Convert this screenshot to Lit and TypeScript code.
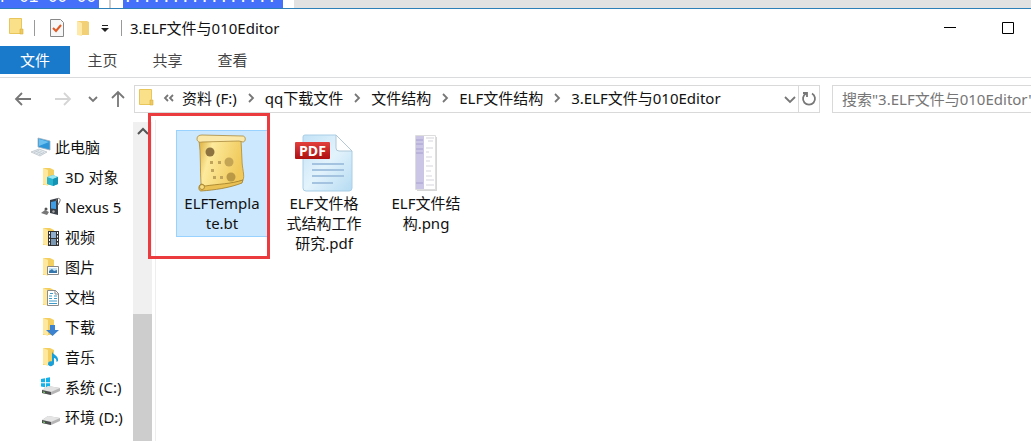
import { LitElement, html, svg, css } from "lit";
import { customElement } from "lit/decorators.js";

const folder = svg`<path d="M2 1h7l4 2v15H2z" fill="#f3cf62"/><path d="M2 1l5 2v16l-5-2z" fill="#ffe79b"/>`;

const icons: Record<string, unknown> = {
  pc: svg`<path d="M7 1l12 3v9L7 10z" fill="#2d95d8" stroke="#9fb4c2" stroke-width=".8"/><path d="M8 2l10 3-10 4z" fill="#6bc0f0"/><path d="M0 15l8-3 8 3-7 4z" fill="#e3e9ed" stroke="#b5bec5" stroke-width=".7"/><path d="M3 15.500l5-2M5.500 16.500l5-2M8 17.500l5-2" stroke="#b2bdc5" stroke-width=".7"/>`,
  cube: svg`${folder}<path d="M6 10l6-2 5 2v7l-5 2-6-2z" fill="#28b4cf"/><path d="M6 10l6-2 5 2-5 2z" fill="#9be6f0"/><path d="M12 12l5-2v7l-5 2z" fill="#1593b4"/>`,
  phone: svg`<path d="M9 3l8-2v17l-8-2z" fill="#3a4048"/><path d="M10 5l5-1v8l-5-.5z" fill="#3f9ee5"/><path d="M15 4c1-4 5-3 4 0l-2 4" fill="none" stroke="#777"/><path d="M0 16l4-3 4 2-2 3-3-1z" fill="#777"/><circle cx="5" cy="12" r="1.500" fill="#555"/><circle cx="12.500" cy="14.500" r="1.200" fill="#aaa"/>`,
  video: svg`${folder}<path d="M7 4h11v15H7z" fill="#333"/><path d="M10 5h5v6h-5z" fill="#8faecd"/><path d="M10 12h5v6h-5z" fill="#7c99b4"/><path d="M8.500 5v14M16.500 5v14" stroke="#fff" stroke-dasharray="2 1.500"/>`,
  picture: svg`${folder}<path d="M6.500 9.500h11v8h-11z" fill="#fff" stroke="#888"/><path d="M8 11h8v5H8z" fill="#c4e2f7"/><path d="M8 16v-2l3-2 2 2 3-1v3z" fill="#3577ad"/>`,
  document: svg`${folder}<path d="M6.500 3.500h8l3 3v12h-11z" fill="#fff" stroke="#8b8b8b"/><path d="M14 3v4h4" fill="none" stroke="#8b8b8b"/><path d="M8 9h3M13 9h3M8 11.500h3M13 11.500h3M8 14h8M8 16.500h8M9 6.500h3" stroke="#3e9bc9"/>`,
  download: svg`${folder}<path d="M9 8h5v5h4l-6.500 6L5 13h4z" fill="#3b82d0"/>`,
  music: svg`${folder}<path d="M11 4c0 4 7 4 6 10l-1.500 1c0-3-1-4-2.500-4v5c0 4-6 4-6 1s3-3 4-2.500z" fill="#18a0dc"/>`,
  system: svg`<path d="M0 2l4-.7v4H0zM5 1l4-.7v5H5zM0 6.200h4v4l-4-.6zM5 6.200h4v5l-4-.7z" fill="#14b1ea"/><path d="M1 13l6-4 12 2v3l-9 4-9-2z" fill="#b5b5b5"/><path d="M1 13l6-4 12 2-9 4z" fill="#e2e2e2"/><path d="M1 13l9 2v3l-9-2z" fill="#4d4f50"/><path d="M2 15l2 .5" stroke="#7ee06a"/>`,
  drive: svg`<path d="M1 13l6-4 12 2v3l-9 4-9-2z" fill="#b5b5b5"/><path d="M1 13l6-4 12 2-9 4z" fill="#e5e5e5"/><path d="M1 13l9 2v3l-9-2z" fill="#4d4f50"/><path d="M2 15l2 .5" stroke="#7ee06a"/>`,
};

const places = [
  ["pc", "此电脑"],
  ["cube", "3D 对象"],
  ["phone", "Nexus 5"],
  ["video", "视频"],
  ["picture", "图片"],
  ["document", "文档"],
  ["download", "下载"],
  ["music", "音乐"],
  ["system", "系统 (C:)"],
  ["drive", "环境 (D:)"],
];

const scroll = html`<svg class="thumb" viewBox="0 0 64 62" aria-hidden="true">
  <defs>
    <linearGradient id="paper" x1="0" x2="1" y2=".3">
      <stop offset="0" stop-color="#dcae3c" /><stop offset=".3" stop-color="#fdea9c" /><stop offset="1" stop-color="#f0c95a" />
    </linearGradient>
  </defs>
  <path d="M9 9c2 14 1 30 2 44l3 3c13-2 26-2 39-7 2-4-1-12-1-20l-1-20z" fill="url(#paper)" stroke="#b08a30" stroke-width=".8" />
  <path d="M7 8c0-3 2-4 5-4l41 1c3 0 3 6 0 6l-4-1-37 1c-3 1-5-1-5-3z" fill="#fbe9ac" stroke="#a98a3c" stroke-width=".8" />
  <path d="M12 53c-4 0-4 7-1 7 14-1 28-3 41-8l1-3c-12 4-25 4-38 6z" fill="#eac155" stroke="#a07d28" stroke-width=".8" />
  <circle cx="12" cy="56" r="2.500" fill="#f8dc80" stroke="#a07d28" stroke-width=".8" />
  <circle cx="20" cy="21" r="4.500" fill="#8d7340" /><circle cx="39" cy="31" r="4.500" fill="#c3a555" /><circle cx="41" cy="46" r="4.500" fill="#b99846" />
  <path d="M20 30h3v3h-3zM28 30h3v3h-3zM21 38h3v3h-3zM23 45h3v3h-3zM30 45h3v3h-3z" fill="#c0a45c" />
</svg>`;

const pdf = html`<svg class="thumb" viewBox="0 0 64 62" aria-hidden="true">
  <defs>
    <linearGradient id="page" x2="1" y2="1"><stop offset="0" stop-color="#c2e2f6" /><stop offset=".5" stop-color="#e3f3fc" /><stop offset="1" stop-color="#b5dbf2" /></linearGradient>
    <linearGradient id="band" x2="0" y2="1"><stop offset="0" stop-color="#e2403c" /><stop offset="1" stop-color="#ae1010" /></linearGradient>
  </defs>
  <path d="M13 4h31l16 16v37q0 3-3 3H14q-3 0-3-3V6q0-2 2-2z" fill="url(#page)" stroke="#a9cee6" />
  <path d="M44 4v13q0 3 3 3h13z" fill="#fff" stroke="#b0c8d8" />
  <path d="M20 33h32M20 39h32M20 45h32M20 52h21" stroke="#a3c3e0" stroke-width="2" />
  <rect x="3" y="11" width="35" height="17" rx="1" fill="url(#band)" />
  <text x="7" y="25" class="pdf">PDF</text>
</svg>`;

const png = html`<svg class="thumb" viewBox="0 0 64 62" aria-hidden="true">
  <path d="M23 6h20v54H23z" fill="#bbb" opacity=".6" />
  <path d="M21.500 4.500h20v54h-20z" fill="#fff" stroke="#ddd" />
  <path d="M22 5h8v53h-8z" fill="#cbc6e6" />
  <path d="M22 9h7M22 13h7M22 18h7M22 22h7M22 52h7" stroke="#a8a0cf" />
  <path d="M32 7h8M34 10h5M32 17h7M32 21h3M32 26h6M32 30h4M32 35h7M32 40h5M32 45h6M32 49h8M32 54h8" stroke="#d5d5dc" />
</svg>`;

const files = [
  { name: "ELFTemplate.bt", art: scroll, selected: true },
  { name: "ELF文件格式结构工作研究.pdf", art: pdf, selected: false },
  { name: "ELF文件结构.png", art: png, selected: false },
];

const crumbs = ["资料 (F:)", "qq下载文件", "文件结构", "ELF文件结构", "3.ELF文件与010Editor"];

const glyph = (d: string, cls = "") =>
  html`<svg class="glyph ${cls}" viewBox="0 0 16 16" aria-hidden="true"><path d=${d} /></svg>`;

const smallFolder = html`<svg class="small" viewBox="0 2 16 18" aria-hidden="true">
  <path d="M1.500 1.500h12v10l1 1v4h-13z" fill="#fbe08a" stroke="#e9c65c" /><path d="M12 12h3v5h-3z" fill="#efcb5f" stroke="#d9b040" stroke-width=".6" />
</svg>`;

@customElement("app-root")
export class AppRoot extends LitElement {
  static styles = css`
    :host {
      display: flex;
      flex-direction: column;
      height: 100vh;
      overflow: hidden;
      background: #fff;
      color: #111;
      font: 15px/20px "Noto Sans", "Noto Sans CJK SC", sans-serif;
    }
    * { box-sizing: border-box; }
    button, input {
      font: inherit;
      color: inherit;
      background: none;
      border: 0;
      padding: 0;
      margin: 0;
    }
    svg { display: block; flex: none; overflow: visible; }
    .behind {
      display: flex;
      flex: none;
      height: 8px;
      overflow: hidden;
      background: #e2e2e3;
      color: #fff;
      font: 16px/20px "Liberation Mono", monospace;
      white-space: pre;
    }
    .behind span { display: flex; align-items: flex-end; background: #4470fa; height: 8px; }
    .gutter { width: 24px; background: linear-gradient(90deg, #fff 10px, #ccc 10px 12px, #fff 12px); }
    .hex { width: 99px; }
    .ascii { width: 160px; }
    .edge { width: 11px; background: #fff; }
    .title {
      display: flex;
      align-items: center;
      flex: none;
      height: 38px;
      border-top: 1px solid #2e80b8;
      padding-left: 8px;
    }
    .title h1 { font: inherit; margin: 0; flex: 1; }
    .small { width: 16px; height: 18px; }
    .bar { width: 1px; height: 16px; background: #999; margin: 0 8px 0 10px; }
    .quick { display: flex; align-items: center; gap: 10px; margin-left: 6px; }
    .quick + .bar { margin: 0 8px 0 12px; }
    .window { display: flex; margin-right: -6px; }
    .window button { width: 58px; display: grid; place-items: center; }
    .window svg { width: 12px; height: 12px; fill: none; stroke: #000; }
    .tabs { display: flex; flex: none; height: 32px; border-bottom: 1px solid #dadbdc; color: #444; }
    .tabs button { height: 28px; width: 65px; text-align: center; }
    .tabs .file { width: 70px; background: #1979ca; color: #fff; }
    .nav { display: flex; align-items: center; flex: none; height: 42px; }
    .arrows { display: flex; width: 134px; padding-left: 15px; align-items: center; }
    .glyph { width: 16px; height: 16px; fill: none; stroke: #777; stroke-width: 1.800; }
    .pale { stroke: #d5d5d5; }
    .arrows button:nth-child(2) { margin: 0 14px 0 24px; }
    .arrows button:nth-child(4) { margin-left: 9px; }
    .address {
      display: flex;
      align-items: center;
      flex: 1;
      height: 28px;
      border: 1px solid #d9d9d9;
      padding-left: 3px;
      white-space: nowrap;
    }
    .address ol { display: flex; list-style: none; margin: 0; padding: 0 0 2px 8px; flex: 1; }
    .address li { display: flex; align-items: center; }
    .address li:first-child { margin-right: 4px; }
    .address a { color: inherit; text-decoration: none; }
    .sep { margin: 0 6px; }
    .reload { border-left: 1px solid #d9d9d9; height: 26px; width: 21px; display: grid; place-items: center; }
    .search { width: 199px; height: 28px; border: 1px solid #d9d9d9; border-right: 0; margin-left: 12px; padding-left: 9px; }
    .search::placeholder { color: #767676; opacity: 1; }
    .main { display: flex; flex: 1; min-height: 0; }
    .side { width: 133px; flex: none; overflow: hidden; }
    .side ul { list-style: none; margin: 0; padding: 12px 0 0 41px; }
    .side li { display: flex; align-items: center; gap: 4px; height: 30px; white-space: nowrap; }
    .side li:first-child { margin-left: -10px; }
    .place { width: 20px; height: 20px; }
    .track { width: 19px; flex: none; display: flex; flex-direction: column; background: #f0f0f0; margin-top: 2px; }
    .track button { height: 20px; display: grid; place-items: center; }
    .track .glyph { stroke: #555; stroke-width: 2; }
    .grip { flex: 1; margin-top: 172px; background: #cdcdcd; }
    .files {
      display: flex;
      align-items: flex-start;
      gap: 10px;
      flex: 1;
      margin-left: 3px;
      border-left: 1px solid #eee;
      padding: 10px 0 0 20px;
    }
    .item { position: relative; width: 92px; border: 1px solid transparent; padding-bottom: 3px; text-align: center; }
    .item.on { background: #cce8ff; border-color: #99d1ff; }
    .thumb { width: 64px; height: 62px; margin: 0 auto; }
    .name { display: block; padding: 0 6px; word-break: break-all; }
    .pdf { font: bold 14px "Open Sans", "Noto Sans", sans-serif; fill: #fff; }
    .mark { position: absolute; inset: -18px -3px -23px -29px; border: 3px solid #ec3b3f; pointer-events: none; }
  `;

  render() {
    return html`
      <div class="behind" aria-hidden="true">
        <span class="hex">F 01 00 00</span><i class="gutter"></i><span class="ascii">................</span><i class="edge"></i>
      </div>
      <header class="title">
        ${smallFolder}<i class="bar"></i>
        <div class="quick">
          <button aria-label="属性">
            <svg class="small" viewBox="0 0 16 18"><path d="M1.500.5h10l3 3v14h-13z" fill="#f7f7f7" stroke="#888" /><path d="M4 9l3 3 5-6" fill="none" stroke="#e05a25" stroke-width="2" /></svg>
          </button>
          <button aria-label="新建文件夹">
            <svg class="small" viewBox="0 0 16 18"><path d="M2 2h10l2 1v13H4z" fill="#f2d075" /><path d="M2 2l5 2v13l-5-1z" fill="#ffe9a8" /></svg>
          </button>
          <button aria-label="自定义快速访问工具栏">
            <svg width="8" height="8" viewBox="0 0 8 8"><path d="M1 1h6v1H1zM0 4h8L4 8z" fill="#222" /></svg>
          </button>
        </div>
        <i class="bar"></i>
        <h1>3.ELF文件与010Editor</h1>
        <div class="window">
          <button aria-label="最小化"><svg viewBox="0 0 12 12"><path d="M0 5.500h12" /></svg></button>
          <button aria-label="最大化"><svg viewBox="0 0 12 12"><path d="M.5.5h11v11H.5z" /></svg></button>
        </div>
      </header>
      <nav class="tabs">
        <button class="file">文件</button><button>主页</button><button>共享</button><button>查看</button>
      </nav>
      <div class="nav">
        <div class="arrows">
          <button aria-label="后退">${glyph("M16 8H1M7 2L1 8l6 6")}</button>
          <button aria-label="前进">${glyph("M0 8h15M9 2l6 6-6 6", "pale")}</button>
          <button aria-label="最近">${glyph("M4 6l4 4 4-4")}</button>
          <button aria-label="上移">${glyph("M8 16V1M2 7l6-6 6 6")}</button>
        </div>
        <div class="address">
          ${smallFolder}
          <ol>
            <li>${glyph("M6 5L3 8l3 3M11 5L8 8l3 3")}</li>
            ${crumbs.map((c, i) => html`<li>${i ? glyph("M6 4l4 4-4 4", "sep") : ""}<a href="#">${c}</a></li>`)}
          </ol>
          <button aria-label="历史">${glyph("M3 6l5 5 5-5")}</button>
          <button class="reload" aria-label="刷新">${glyph("M11 2.500a6 6 0 1 1-6 0M2 2h4v4")}</button>
        </div>
        <input class="search" type="text" aria-label="搜索" placeholder='搜索"3.ELF文件与010Editor"' />
      </div>
      <div class="main">
        <nav class="side">
          <ul>
            ${places.map(([k, n]) => html`<li><svg class="place" viewBox="0 0 20 20" aria-hidden="true">${icons[k]}</svg><span>${n}</span></li>`)}
          </ul>
        </nav>
        <div class="track"><button aria-label="向上滚动">${glyph("M3 10l5-5 5 5")}</button><div class="grip"></div></div>
        <main class="files">
          ${files.map((f) => html`<div class="item ${f.selected ? "on" : ""}">${f.art}<span class="name">${f.name}</span>${f.selected ? html`<i class="mark"></i>` : ""}</div>`)}
        </main>
      </div>
    `;
  }
}
